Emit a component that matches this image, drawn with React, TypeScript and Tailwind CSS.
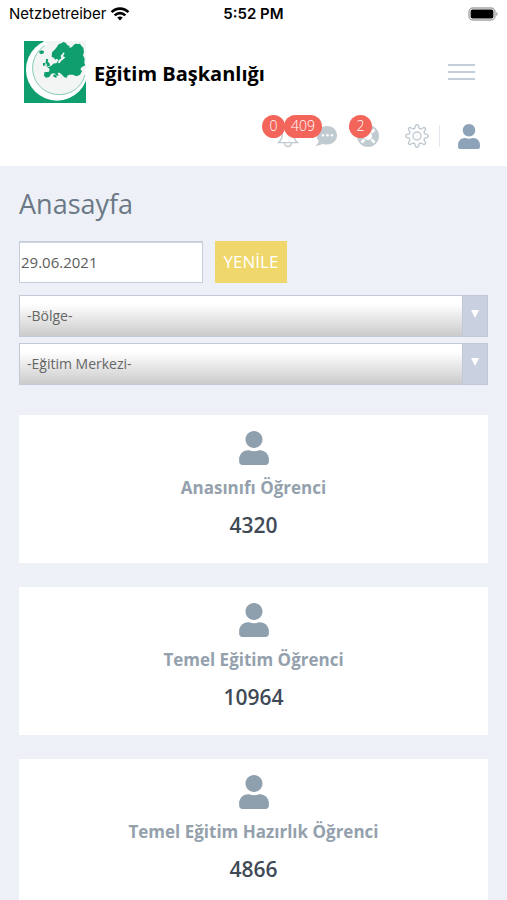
import type { ReactNode } from 'react';

function UserIcon({ className }: { className: string }) {
  return (
    <svg viewBox="0 0 448 512" fill="currentColor" className={className} aria-hidden="true">
      <path d="M224 256c70.7 0 128-57.3 128-128S294.7 0 224 0 96 57.3 96 128s57.3 128 128 128zm89.6 32h-16.7c-22.2 10.2-46.9 16-72.9 16s-50.6-5.8-72.9-16h-16.7C60.2 288 0 348.2 0 422.4V464c0 26.5 21.5 48 48 48h352c26.5 0 48-21.5 48-48v-41.6c0-74.2-60.2-134.4-134.4-134.4z" />
    </svg>
  );
}

function Logo() {
  return (
    <svg viewBox="0 0 186 186" className="size-[62px] shrink-0" aria-hidden="true">
      <rect width="186" height="186" fill="#0f9f6e" />
      <circle cx="99" cy="86" r="93" fill="#fff" />
      <circle cx="105" cy="82" r="80" fill="#f3f5f4" />
      <path d="M56 0H186V60H150Z" fill="#f3f5f4" />
      <path d="M62 14A80 80 0 1 0 183 102" fill="none" stroke="#4fb391" strokeWidth="2" />
      <g fill="#0f9f6e">
        <path d="M83 48L84 34L92 26L98 19L104 10L112 7L118 3L126 6L130 13L137 15L136 21L144 18L149 12L154 8L162 9L168 8L172 14L178 20L180 34L177 42L182 54L181 66L184 73L174 78L169 84L174 91L168 101L158 106L146 101L136 101L130 104L128 111L120 108L114 101L107 95L101 95L104 104L98 104L91 97L82 98L76 108L66 110L60 104L61 94L75 92L77 84L70 79L80 76L88 68L98 66L103 57L99 53L93 56L90 50Z" />
        <path d="M46 31L53 28L60 31L59 37L52 40L46 36Z" />
        <path d="M66 53L73 55L71 61L77 68L78 74L67 77L69 70L65 66ZM57 66L64 65L64 73L57 75Z" />
        <path d="M90 100L98 104L97 111L87 106Z" />
      </g>
      <path d="M104 58L112 52L110 44L119 34L122 36L117 46L124 49L119 54L112 59L107 66L102 67Z" fill="#f3f5f4" />
    </svg>
  );
}

function StatusBar() {
  return (
    <div className="grid h-7 grid-cols-3 items-center px-[9px] font-['Inter','Liberation_Sans',sans-serif] text-[15px] text-black">
      <div className="flex items-center gap-1">
        <span>Netzbetreiber</span>
        <svg viewBox="0 0 20 14" className="h-[14px] w-5" fill="none" stroke="#000" strokeWidth="2.6" aria-hidden="true">
          <path d="M1.6 5.2C6.3 .4 13.7 .4 18.4 5.2M4.7 8.4C7.7 5.4 12.3 5.4 15.3 8.4" />
          <path d="M10 13.4L7.2 10.6Q10 8.2 12.8 10.6Z" fill="#000" stroke="none" />
        </svg>
      </div>
      <span className="text-center font-semibold">5:52 PM</span>
      <svg viewBox="0 0 30 14" className="h-[14px] w-[30px] justify-self-end" aria-hidden="true">
        <rect x="1" y="1" width="26" height="12" rx="4" fill="#fff" stroke="#a5a5a5" strokeWidth="1.4" />
        <rect x="2.6" y="2.4" width="22.8" height="9.2" rx="2" fill="#000" />
        <path d="M28.2 5v4q1.4-.5 1.4-2t-1.4-2Z" fill="#a5a5a5" />
      </svg>
    </div>
  );
}

function Badge({ children, className }: { children: ReactNode; className: string }) {
  return (
    <span className={`absolute -top-[9px] flex h-[23px] items-center justify-center rounded-full bg-[#f3655a] pb-[2px] text-sm font-light text-white ${className}`}>
      {children}
    </span>
  );
}

function Toolbar() {
  return (
    <nav aria-label="Kısayollar" className="flex h-6 items-center justify-end pr-[27px] text-[#c0cad1]">
      <button type="button" aria-label="Bildirimler" className="relative mr-4 h-6 w-[22px]">
        <svg viewBox="0 0 22 24" className="h-6 w-[22px]" fill="none" stroke="currentColor" strokeWidth="1.4" aria-hidden="true">
          <path d="M11 3.5V2M11 3.5C7.5 3.5 5.4 6 5.4 9.2C5.4 14.5 4 16.5 1.6 18.6H20.4C18 16.5 16.6 14.5 16.6 9.2C16.6 6 14.5 3.5 11 3.5ZM7.5 19A3.5 3.5 0 0 0 14.5 19" />
        </svg>
        <Badge className="-left-[15px] w-[23px]">0</Badge>
      </button>
      <button type="button" aria-label="Mesajlar" className="relative mr-5 h-6 w-[22px]">
        <svg viewBox="0 0 22 24" className="h-6 w-[22px]" aria-hidden="true">
          <path d="M12 2C6 2 1.5 6 1.5 11C1.5 13.5 2.4 15.4 3.8 17C3.4 19 2 20.7 .4 21.7C3.6 22 5.8 21 7.5 19.8C9 20.4 10.4 20.6 12 20.6C18 20.6 22 16.5 22 11.3S18 2 12 2Z" fill="currentColor" />
          <g fill="#fff">
            <circle cx="8" cy="11.3" r="1.3" />
            <circle cx="12.5" cy="11.3" r="1.3" />
            <circle cx="17" cy="11.3" r="1.3" />
          </g>
        </svg>
        <Badge className="right-[15px] w-[38px]">409</Badge>
      </button>
      <button type="button" aria-label="Destek" className="relative mr-[26px] h-6 w-[22px]">
        <svg viewBox="0 0 22 24" className="h-6 w-[22px]" fill="none" aria-hidden="true">
          <circle cx="11" cy="12" r="7.5" stroke="currentColor" strokeWidth="7" />
          <g stroke="#fff" strokeWidth="2.6">
            <path d="M4.5 5.5l3 3M14.5 15.5l3 3M17.5 5.5l-3 3M7.5 15.5l-3 3" />
          </g>
        </svg>
        <Badge className="-left-2 w-[23px]">2</Badge>
      </button>
      <button type="button" aria-label="Ayarlar" className="mr-[10px] size-6">
        <svg viewBox="0 0 24 24" className="size-6" fill="none" stroke="currentColor" strokeWidth="1.4" strokeLinejoin="round" aria-hidden="true">
          <path d="M10.6 1.4Q12 .2 13.4 1.4L14.2 4.3L16 5L18.6 3.5Q20.6 3.4 20.5 5.4L19 8L19.7 9.8L22.6 10.6Q23.8 12 22.6 13.4L19.7 14.2L19 16L20.5 18.6Q20.6 20.6 18.6 20.5L16 19L14.2 19.7L13.4 22.6Q12 23.8 10.6 22.6L9.8 19.7L8 19L5.4 20.5Q3.4 20.6 3.5 18.6L5 16L4.3 14.2L1.4 13.4Q.2 12 1.4 10.6L4.3 9.8L5 8L3.5 5.4Q3.4 3.4 5.4 3.5L8 5L9.8 4.3Z" />
          <circle cx="12" cy="12" r="4" />
        </svg>
      </button>
      <span className="mr-[18px] h-[22px] w-px bg-[#e3e8ee]" />
      <button type="button" aria-label="Profil" className="text-[#8da3b7]">
        <UserIcon className="h-[25px] w-[22px]" />
      </button>
    </nav>
  );
}

function Filter({ id, label }: { id: string; label: string }) {
  return (
    <div className="relative">
      <select
        id={id}
        aria-label={label}
        className="block h-[42px] w-full appearance-none rounded-none border border-[#c2cad8] bg-linear-to-b from-white from-20% to-[#cbcbcb] pr-8 pl-[7px] text-sm text-[#666]"
      >
        <option>-{label}-</option>
      </select>
      <span className="pointer-events-none absolute inset-y-0 right-0 flex w-[26px] justify-center border border-[#c0c8d6] bg-[#c9d1e0] pt-[14px]">
        <svg viewBox="0 0 8 8" className="size-2" fill="#fff" aria-hidden="true">
          <path d="M0 0H8L4 8Z" />
        </svg>
      </span>
    </div>
  );
}

const stats = [
  { label: 'Anasınıfı Öğrenci', value: 4320 },
  { label: 'Temel Eğitim Öğrenci', value: 10964 },
  { label: 'Temel Eğitim Hazırlık Öğrenci', value: 4866 },
];

export default function App() {
  return (
    <div className="h-screen overflow-hidden bg-[#edf1f7] font-['Open_Sans','Noto_Sans',sans-serif]">
      <header className="bg-white pb-[18px]">
        <StatusBar />
        <div className="flex items-center gap-2 pt-[13px] pr-8 pb-[21px] pl-6">
          <Logo />
          <span className="flex-1 pt-1 text-xl font-bold text-black">Eğitim Başkanlığı</span>
          <button type="button" aria-label="Menü" className="flex w-[27px] flex-col gap-[5px]">
            <span className="h-[2px] bg-[#c4ced8]" />
            <span className="h-[2px] bg-[#c4ced8]" />
            <span className="h-[2px] bg-[#c4ced8]" />
          </button>
        </div>
        <Toolbar />
      </header>
      <main className="px-[19px] pt-[19px]">
        <h1 className="text-[27px] leading-[38px] text-[#6b7885]">Anasayfa</h1>
        <form className="mt-[18px]" onSubmit={(e) => e.preventDefault()}>
          <div className="mb-3 flex gap-3">
            <input
              type="text"
              aria-label="Tarih"
              defaultValue="29.06.2021"
              className="h-[42px] w-[184px] border border-[#c5cdd8] bg-white pl-px text-[15px] text-[#5c5c5c] shadow-[inset_0_1px_0_#cdd4dd] outline-none"
            />
            <button type="submit" className="h-[42px] w-[72px] bg-[#efd76b] text-[17px] text-white">YENİLE</button>
          </div>
          <div className="flex flex-col gap-[6px]">
            <Filter id="bolge" label="Bölge" />
            <Filter id="merkez" label="Eğitim Merkezi" />
          </div>
        </form>
        <div className="mt-[30px] flex flex-col gap-6">
          {stats.map((s) => (
            <section key={s.label} className="flex h-[148px] flex-col items-center bg-white pt-4 text-center">
              <UserIcon className="h-[34px] w-[30px] text-[#8e9fae]" />
              <h2 className="mt-[11px] text-[17px] leading-6 font-bold text-[#94a1ad]">{s.label}</h2>
              <p className="mt-[11px] text-[21px] leading-7 font-semibold text-[#3f4a56]">{s.value}</p>
            </section>
          ))}
        </div>
      </main>
    </div>
  );
}
